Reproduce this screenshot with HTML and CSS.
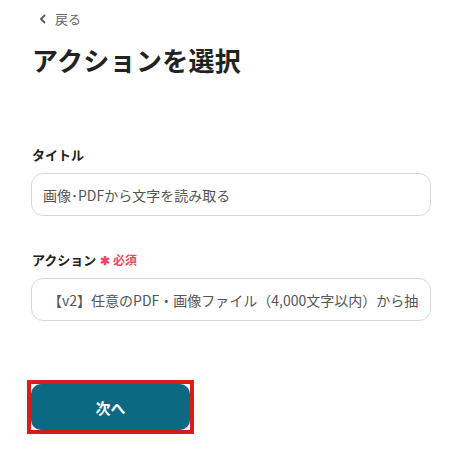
FILE: index.html
```html
<!DOCTYPE html>
<html lang="ja">
<head>
<meta charset="utf-8">
<link rel="stylesheet" href="styles.css">
</head>
<body>
<div class="page">
  <a class="back" href="#">
    <svg class="chev" width="8" height="10" viewBox="0 0 8 10"><path d="M6 1 L2 5 L6 9" fill="none" stroke="#555" stroke-width="1.8"/></svg>
    <span>戻る</span>
  </a>
  <h1 class="title">アクションを選択</h1>

  <div class="field first">
    <div class="label">タイトル</div>
    <div class="input">画像･PDFから文字を読み取る</div>
  </div>

  <div class="field">
    <div class="label">アクション <span class="req">✱ 必須</span></div>
    <div class="input select"><span class="clip">【v2】任意のPDF・画像ファイル（4,000文字以内）から抽出</span></div>
  </div>

  <div class="actions">
    <div class="highlight">
      <button class="next">次へ</button>
    </div>
  </div>
</div>
</body>
</html>
```
FILE: styles.css
```css
* { box-sizing: border-box; }
html, body { margin: 0; padding: 0; background: #fff; }
body {
  font-family: "Noto Sans CJK JP", "Noto Sans", sans-serif;
  color: #222;
}
.page {
  padding: 10px 36px 0 31px;
  width: 467px;
}
.back {
  display: flex;
  align-items: center;
  gap: 8px;
  padding-left: 8px;
  color: #666;
  text-decoration: none;
  font-size: 13px;
  line-height: 18px;
}
.chev { display: block; }
.title {
  margin: 14px 0 0 1px;
  font-size: 26px;
  font-weight: 700;
  line-height: 36px;
  color: #222;
  letter-spacing: 0.3px;
}
.field { margin-top: 35px; }
.field.first { margin-top: 68px; }
.label {
  font-size: 13px;
  font-weight: 700;
  line-height: 18px;
  color: #222;
  margin-bottom: 9px;
  padding-left: 1px;
}
.req {
  color: #e94a6a;
  font-weight: 700;
  font-size: 12px;
  margin-left: 1px;
}
.input {
  height: 43px;
  border: 1px solid #d3d8e0;
  border-radius: 12px;
  padding: 0 12px 0 11px;
  display: flex;
  align-items: center;
  font-size: 14px;
  color: #555;
  overflow: hidden;
  white-space: nowrap;
}
.input.select { padding-left: 16px; }
.select .clip {
  display: block;
  overflow: hidden;
  white-space: nowrap;
  width: 100%;
}
.actions { margin-top: 59px; padding-left: 0; }
.highlight {
  display: inline-block;
  border: 4px solid #e41c1c;
  margin-left: -4px;
  line-height: 0;
}
.next {
  width: 159px;
  height: 46px;
  border: none;
  border-radius: 10px;
  background: #0b6a82;
  color: #fff;
  font-family: inherit;
  font-size: 15px;
  font-weight: 700;
  box-shadow: 0 4px 14px rgba(0,0,0,0.12);
  cursor: pointer;
}
```
